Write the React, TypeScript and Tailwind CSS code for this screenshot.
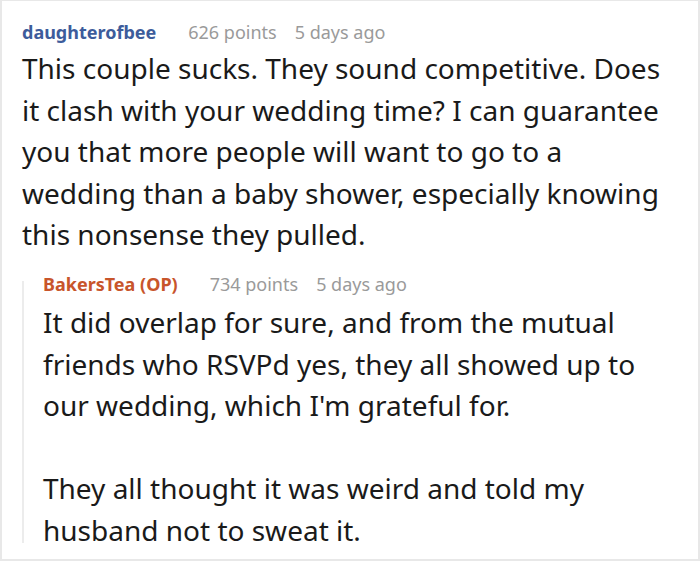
export default function App() {
  return (
    <div className="w-[700px] h-[562px] bg-white overflow-hidden" style={{ fontFamily: '"Noto Sans", "Open Sans", sans-serif' }}>
      <div className="h-[561px] border-l-2 border-r-2 border-b-2 border-t border-[#e8e8e8] pl-[20px] pt-[18px] overflow-hidden">
        {/* parent comment */}
        <div className="flex items-center gap-[32px] h-[26px] text-[18px] leading-[26px]">
          <span className="font-bold text-[#3d5c9b]">daughterofbee</span>
          <span className="flex gap-[18px] text-[#9a9a9a]">
            <span>626 points</span>
            <span>5 days ago</span>
          </span>
        </div>
        <p className="mt-[3px] text-[28px] leading-[41.6px] text-[#1a1a1a] pr-[16px]">
          This couple sucks. They sound competitive. Does it clash with your wedding time? I can guarantee you that more people will want to go to a wedding than a baby shower, especially knowing this nonsense they pulled.
        </p>

        {/* reply */}
        <div className="mt-[15px] flex">
          <div className="mt-[10px] w-[2px] h-[262px] bg-[#ececec] shrink-0" />
          <div className="pl-[19px] h-[272px] overflow-hidden">
            <div className="flex items-center gap-[32px] h-[26px] text-[18px] leading-[26px]">
              <span className="font-bold text-[#c8552b]">BakersTea (OP)</span>
              <span className="flex gap-[18px] text-[#9a9a9a]">
                <span>734 points</span>
                <span>5 days ago</span>
              </span>
            </div>
            <div className="mt-[5px] text-[28px] leading-[41.6px] text-[#1a1a1a] pr-[16px]">
              <p>It did overlap for sure, and from the mutual friends who RSVPd yes, they all showed up to our wedding, which I'm grateful for.</p>
              <p className="mt-[41.6px]">They all thought it was weird and told my husband not to sweat it.</p>
            </div>
          </div>
        </div>
      </div>
    </div>
  );
}
